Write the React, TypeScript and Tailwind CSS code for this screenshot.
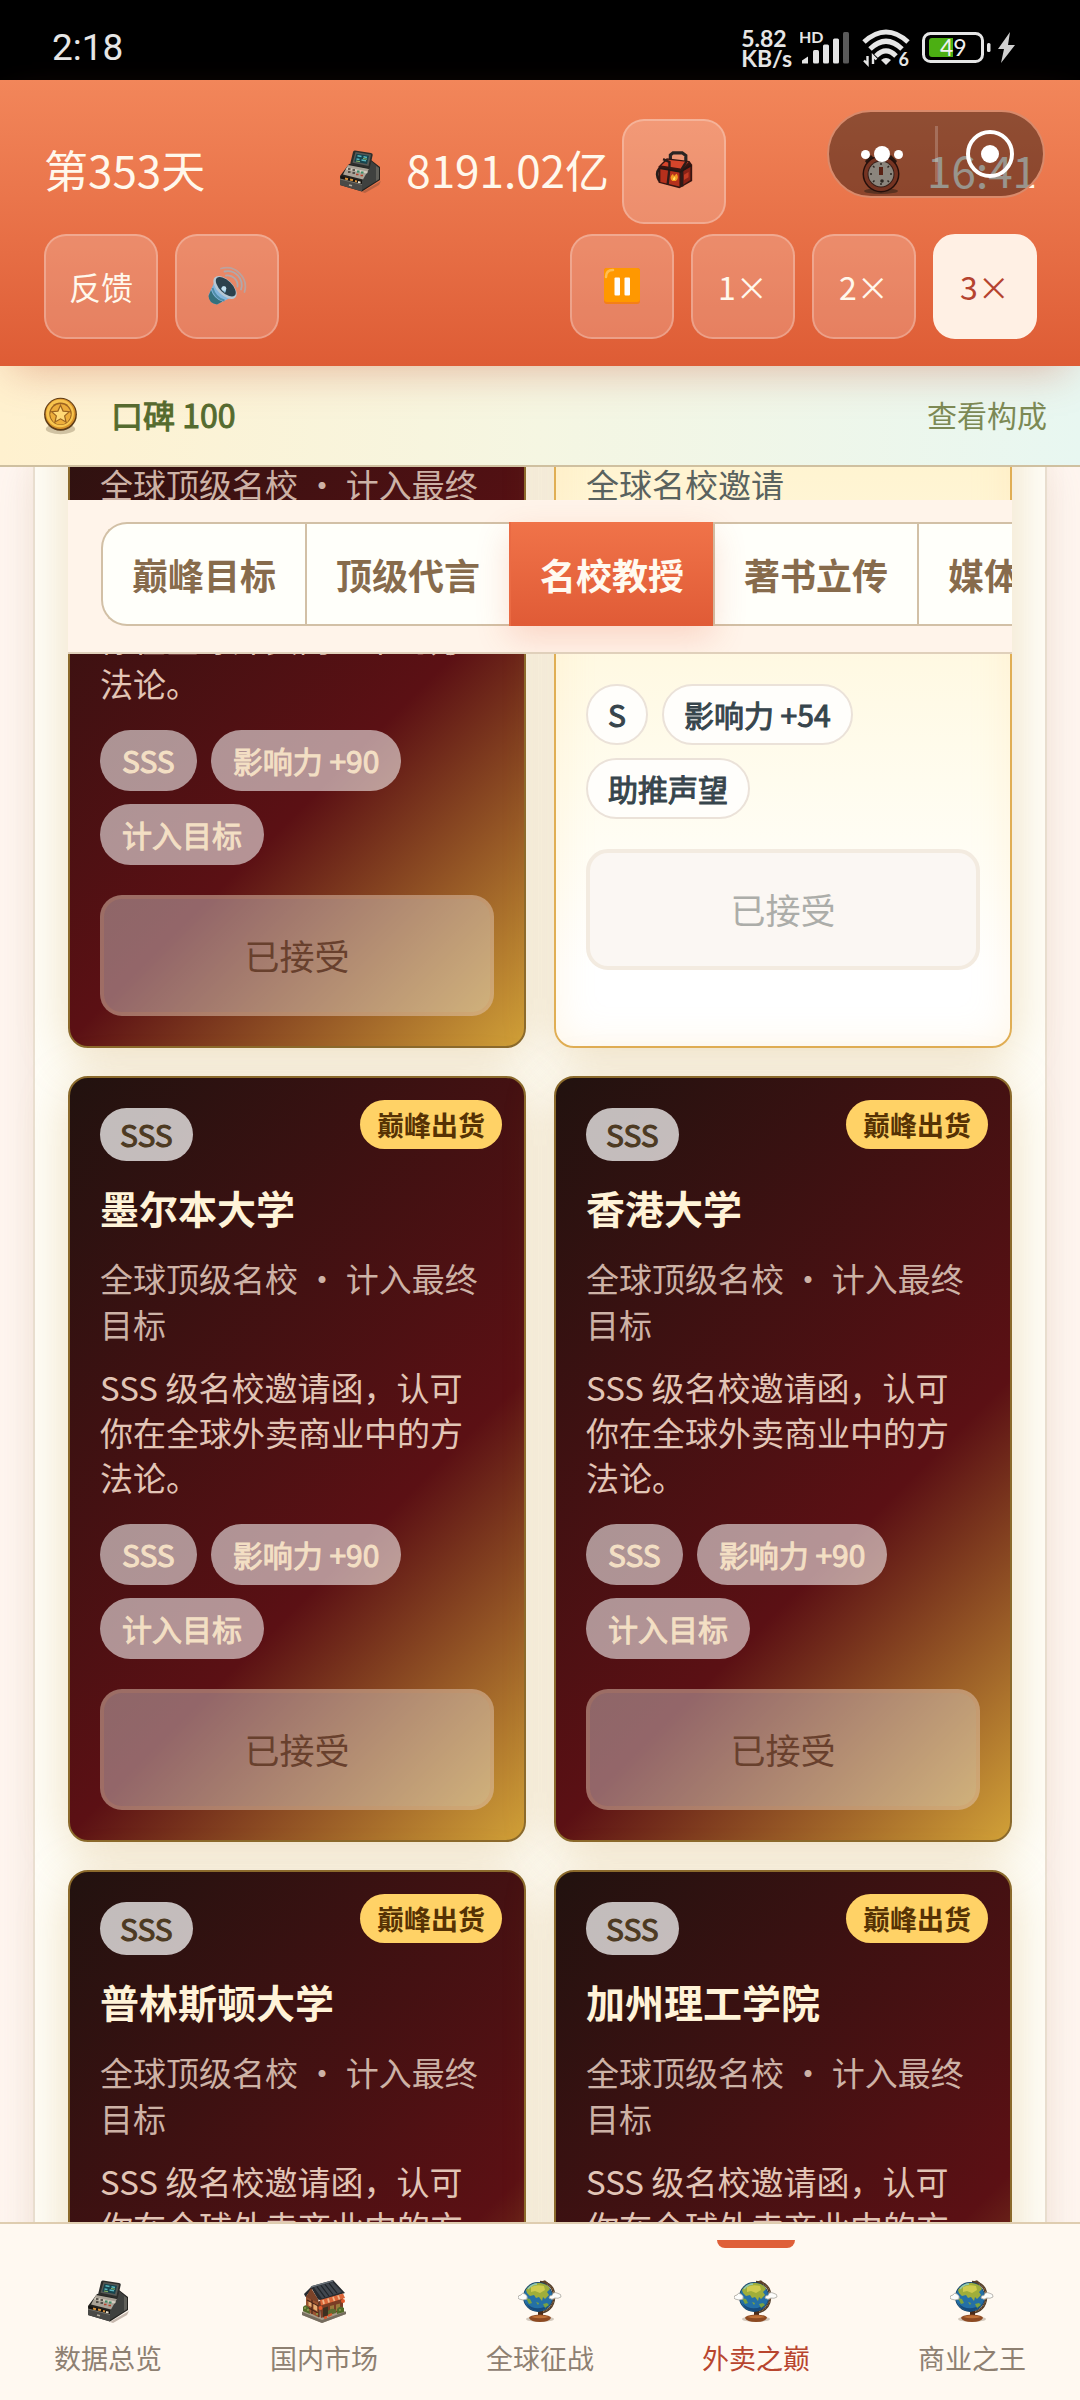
import type { ReactNode } from "react";

type IconProps = { className?: string };

const RegisterIcon = ({ className }: IconProps) => (
  <svg viewBox="0 0 44 44" className={className} aria-hidden="true">
    <path d="M24 42 L43 31 L41 35 L27 43Z" fill="#5b4030" opacity=".35" />
    <path d="M11 14 L33 10 L42 17 V30 L24 41.5 L2 35 V26Z" fill="#23221f" />
    <path d="M33 11 L41 17.5 V29.5 L24 40 V31 L31 19Z" fill="#3f413f" />
    <path d="M38 16 L41 18 V29 L38 31Z" fill="#60605a" />
    <path d="M10 15 L31 19 L25 29.5 L5 24.5Z" fill="#aaa397" />
    <path d="M9 17.5 L30 21.5 L29 23.5 L8 19.5Z" fill="#d3cdbf" />
    <path d="M10 19h2.5M14.5 20h2.5M10 22h2.500M14.500 23h2.500" stroke="#39342e" strokeWidth="1.500" />
    <path d="M19 21.500h2.500M23 22.500h2.500" stroke="#3d8c66" strokeWidth="1.800" />
    <path d="M18 24.500h2.500M22.500 25.500h2.500" stroke="#b3432d" strokeWidth="1.600" />
    <path d="M3 26 L24 31 V34 L3 30Z" fill="#15120f" />
    <path d="M7 28.500l3 .700M12 29.500l3 .800M17 31l2 .500" stroke="#d7913a" strokeWidth="2" />
    <path d="M20 32l2.500 .600" stroke="#ece4ce" strokeWidth="2" />
    <path d="M2 29 L24 34.500 V41.500 L2 35Z" fill="#4a4a47" />
    <path d="M2 29 L24 34.500" stroke="#77766e" strokeWidth="1" />
    <path d="M11 35l3 .800" stroke="#b5b0a3" strokeWidth="1.500" />
    <path d="M17 0.500 L33 3 Q35 3.400 34.700 5 L32 17 Q31.500 18.600 30 18.300 L14 15 Q12 14.500 12.400 13 L15 2 Q15.400 0.300 17 .500Z" fill="#2c2d2b" />
    <path d="M17.500 2 L33 4.500 L30.500 16 L14.500 12.800Z" fill="#575955" />
    <path d="M18.500 3.800 L31 5.800 L29 14 L16.300 11.500Z" fill="#17434d" />
    <path d="M19.500 5.800l4 .700M25.500 6.800l3.500 .600M18.500 9l3 .500M23.500 10l4.500 .800" stroke="#58b5bd" strokeWidth="1.500" />
    <path d="M18 11l4 .700M25 8.500l4 .700" stroke="#8db763" strokeWidth="1" />
  </svg>
);

const ShopIcon = ({ className }: IconProps) => (
  <svg viewBox="0 0 44 44" className={className} aria-hidden="true">
    <path d="M0 32 L22 21 L44 32 V34 L20 43 L0 35Z" fill="#a69c8a" />
    <path d="M0 32 L20 40 L44 31.500 V34 L20 43 L0 35Z" fill="#756c5e" />
    <path d="M4 15 L17 22 V37.500 L4 31Z" fill="#9a5330" />
    <path d="M17 21 L41 15 V30 L19 38Z" fill="#7a3d25" />
    <path d="M5 20l11 6M5 27l11 6M10 17v17M17 22v15" stroke="#49261a" strokeWidth="1.200" />
    <path d="M6.500 21.500l3 1.500v4l-3-1.500zM11.500 24l3.500 2v5l-3.500-2z" fill="#e5ae72" />
    <path d="M21 28l5-1.500v9l-5 2z" fill="#3b3020" />
    <path d="M28 26l4-1v7l-4 1.500zM34 24.500l4-1v6l-4 1.500z" fill="#9a7a3c" />
    <path d="M2 14 L10 6 L31 0 L43 13 L20 20.500 L16 19.500 L10 9 L3.500 17Z" fill="#272b30" />
    <path d="M12 7.500 L30.500 2 L40 12 L20 18.500Z" fill="#41474f" />
    <path d="M15 6.700l8 10.700M19 5.500l8 10.500M23 4.300l8 10.200M27 3.200l8 10" stroke="#1f2428" strokeWidth="1.200" />
    <path d="M9 7 L31 .800" stroke="#6c747b" strokeWidth="1.300" />
    <path d="M9 8 L4 17 L17 23 L16 19Z" fill="#7b4329" />
    <path d="M18 20 L41 13.500 L43 18 L19 25.500Z" fill="#dc6638" />
    <path d="M21 20l1 4M26 18.500l1 4M31 17l1.500 4M36 15.500l1.500 4" stroke="#f0b688" strokeWidth="1.800" />
    <circle cx="18.500" cy="28" r="2" fill="#e2592c" />
    <circle cx="41" cy="21" r="2" fill="#e2592c" />
    <path d="M1 27q3-4 6 1l1 6-7-3zM35 29q3-4 7-1v4l-7 2z" fill="#536b2c" />
    <path d="M26 31q4-4 8-1v3l-8 2z" fill="#5d6b30" />
    <path d="M2 28h2M5 30h2M37 30h2M14 34h2" stroke="#8ca04b" strokeWidth="1.500" />
    <path d="M26 36l4-2M22 38l3-1" stroke="#d9572d" strokeWidth="2.500" />
  </svg>
);

const GlobeIcon = ({ className }: IconProps) => (
  <svg viewBox="0 0 44 44" className={className} aria-hidden="true">
    <ellipse cx="22" cy="39" rx="14" ry="3" fill="#4a3620" opacity=".25" />
    <path d="M22 2 Q37 3 36 18 Q35 31 21 33" fill="none" stroke="#4e3a28" strokeWidth="2.600" />
    <path d="M25 2.500 Q37 5 36 18 Q35 30 22 32.500" fill="none" stroke="#a47a4c" strokeWidth="1" strokeDasharray="2 1.500" />
    <path d="M23 1.500l4-1.200 3 2.500-3 2z" fill="#5c4029" />
    <path d="M20 31h5v6h-5z" fill="#4a2b1a" />
    <path d="M11 38 Q11 35 22 34.500 Q33 35 33 38 Q31 42 22 42 Q13 42 11 38Z" fill="#8d4a22" />
    <path d="M13 37 Q22 33.500 31 37 Q22 39.500 13 37Z" fill="#bf7138" />
    <circle cx="20" cy="17" r="15" fill="#1c4465" />
    <circle cx="20" cy="17" r="14.200" fill="#2470a6" />
    <path d="M8 23 Q18 33 32 24 Q27 31 20 31.200 Q12 31 8 23Z" fill="#164b7e" />
    <path d="M8 10 Q13 2.500 22 3 Q30 4 32 9 L29 12 L31 15 L27 19 L25 17 L24 21 L21 17 L18 18 L16 15 L12 16 L9 13Z" fill="#9fae3a" />
    <path d="M13 7 Q19 4 26 6 L27 10 L22 13 L17 11 L13 12Z" fill="#cfcb4e" />
    <path d="M8 18l4 1 2 4-3 1zM25 24l4-1 2 2-4 3zM18 22l3 1-1 2z" fill="#7aa341" />
    <path d="M10 9 Q14 4 19 4" fill="none" stroke="#8fd0d0" strokeWidth="1.300" opacity=".8" />
    <path d="M0 18 Q0 15 3 15 Q4 12 7 14 Q10 16 9 19 Q5 21 1 19Z" fill="#fdfdfb" stroke="#aaa79f" strokeWidth=".800" />
    <path d="M31 18 Q31 15 34 15.500 Q35 11.500 39 13 Q44 14 43 17 Q40 19 37 18 Q34 20.500 31 18Z" fill="#fdfdfb" stroke="#aaa79f" strokeWidth=".800" />
  </svg>
);

const BackpackIcon = ({ className }: IconProps) => (
  <svg viewBox="0 0 44 44" className={className} aria-hidden="true">
    <path d="M18 9V4.500L21 2h10l4 3v6" fill="none" stroke="#2b2523" strokeWidth="3.500" />
    <path d="M6 19 Q1 25 6 33" fill="none" stroke="#241d1b" strokeWidth="3" />
    <path d="M5 17 L14 8 L39 11 L42 15 V33 L28 41 L5 35Z" fill="#381511" />
    <path d="M8 16 L15 9.500 L38 12 L31 19.500Z" fill="#d6452b" />
    <path d="M7 19 L28 23 V39 L7 34Z" fill="#b5301c" />
    <path d="M30 23 L40 16 V32 L30 38.500Z" fill="#8a2216" />
    <path d="M10 9 L17 12 V19 L15 37M36 11 L31 19 V39" fill="none" stroke="#2d1b18" strokeWidth="2.600" />
    <path d="M6 19 L29 23 L41 16" fill="none" stroke="#231614" strokeWidth="1.800" />
    <path d="M20 33q-4-4 1-8q0 3 2 2q1-2 2-2q3 5-1 8z" fill="#f49b22" />
    <path d="M21 32q-1-2 2-4q1 2 0 4z" fill="#ffe06a" />
    <path d="M33 26l5-3v6l-5 3z" fill="#c33b24" />
  </svg>
);

const ClockIcon = ({ className }: IconProps) => (
  <svg viewBox="0 0 44 44" className={className} aria-hidden="true">
    <ellipse cx="22" cy="41" rx="17" ry="3" fill="#5e3d2b" opacity=".6" />
    <path d="M6 11l6-6 4 4-7 7zM38 11l-6-6-4 4 7 7zM19 3h6v7h-6z" fill="#46281e" />
    <circle cx="22" cy="24" r="18.500" fill="#3f1a12" />
    <circle cx="22" cy="24" r="17" fill="#c4573a" />
    <circle cx="22" cy="24" r="13.500" fill="#5e3428" />
    <circle cx="22" cy="24" r="12.500" fill="#e8ded0" />
    <path d="M22 13v2M22 33v2M11 24h2M31 24h2M14 16l1.500 1.500M30 16l-1.500 1.500M14 32l1.500-1.500M30 32l-1.500-1.500" stroke="#4b4139" strokeWidth="1.500" />
    <path d="M22 17v8" stroke="#943a24" strokeWidth="4" />
    <circle cx="23" cy="31" r="1.800" fill="#4b4139" />
  </svg>
);

const CoinIcon = ({ className }: IconProps) => (
  <svg viewBox="0 0 40 44" className={className} aria-hidden="true">
    <ellipse cx="20" cy="37" rx="17" ry="6" fill="#7a6a4a" opacity=".35" />
    <circle cx="20" cy="20" r="19" fill="#5c3a17" />
    <circle cx="20" cy="19.500" r="17.500" fill="#d6922b" />
    <circle cx="19.500" cy="19" r="16" fill="#f8c64f" />
    <circle cx="20" cy="19.500" r="13" fill="#9c6420" />
    <circle cx="20" cy="20" r="11.800" fill="#edae3b" />
    <path d="M20 9.500l3 6.800 7.300.700-5.500 4.900 1.600 7.200L20 25.300l-6.400 3.800 1.600-7.200-5.500-4.900 7.300-.700z" fill="#ffd976" stroke="#9c6420" strokeWidth="1.400" />
  </svg>
);

const SpeakerIcon = ({ className }: IconProps) => (
  <svg viewBox="0 0 40 40" className={className} aria-hidden="true">
    <g fill="none" stroke="#b0a9ab" strokeWidth="1.800" strokeLinecap="round">
      <path d="M19 9.500a10 10 0 0 1 11.500 11" />
      <path d="M17.500 5.500a14 14 0 0 1 16.500 18" />
      <path d="M14 2.500a19 19 0 0 1 23.500 23.500" opacity=".8" />
    </g>
    <path d="M7 17 L1.500 29 Q2 37.500 10 38.500 L23 32Z" fill="#83b5dc" />
    <path d="M4 24 L1.500 30 Q2 37.500 10 38.500 L15.500 35.500 Q7 33 4 24Z" fill="#35707c" />
    <path d="M5.500 22 Q8 32 17.500 34.500" fill="none" stroke="#4f8da9" strokeWidth="2" />
    <ellipse cx="18" cy="21.500" rx="14.300" ry="7.800" transform="rotate(44 18 21.500)" fill="#b5c7d4" />
    <ellipse cx="18.800" cy="20.800" rx="12.500" ry="6.200" transform="rotate(44 18.800 20.800)" fill="#2b414d" />
    <path d="M14 23 Q15 19 18.500 21 Q20 23 18 27Z" fill="#8fc1df" />
    <circle cx="17" cy="22.500" r="2.300" fill="#c4e0ef" />
  </svg>
);

const PauseIcon = ({ className }: IconProps) => (
  <svg viewBox="0 0 38 38" className={className} aria-hidden="true">
    <rect x="1" y="1" width="36" height="36" rx="3" fill="#f57f17" />
    <rect x="1" y="1" width="36" height="34" rx="3" fill="#ff9800" />
    <path d="M3 10 Q3 3 10 3" fill="none" stroke="#ffbd52" strokeWidth="2.500" strokeLinecap="round" />
    <rect x="11.500" y="10.500" width="5.500" height="18" rx="1" fill="#fdfdfd" />
    <rect x="21.500" y="10.500" width="5.500" height="18" rx="1" fill="#fdfdfd" />
  </svg>
);

const SignalIcon = () => (
  <svg viewBox="0 0 50 36" className="h-9 w-[50px]" aria-hidden="true">
    <text x="-1" y="12.500" fontSize="16" fontWeight="700" fontFamily="Lato, sans-serif" fill="#e6e6e6">HD</text>
    <g fill="#e6e6e6">
      <path d="M2 33.500v-3l6-4v7z" />
      <rect x="13" y="20" width="6" height="13.500" rx="1.500" />
      <rect x="23" y="14.500" width="6" height="19" rx="1.500" />
      <rect x="33" y="8.500" width="6" height="25" rx="1.500" />
    </g>
    <rect x="43" y="2" width="6" height="31.500" rx="1.500" fill="#5a5a5a" />
  </svg>
);

const WifiIcon = () => (
  <svg viewBox="0 0 48 38" className="h-[38px] w-12" aria-hidden="true">
    <g fill="none" stroke="#e6e6e6" strokeWidth="5">
      <path d="M2 13 Q24 -7 46 13" />
      <path d="M8 20 Q24 4.500 40 20" />
      <path d="M14 27 Q24 17 34 27" />
    </g>
    <path d="M24 36l-5-5q5-4 10 0z" fill="#e6e6e6" />
    <path d="M5.500 27v8l-3.500-3.500M11 35v-8l3.500 3.500" fill="none" stroke="#e6e6e6" strokeWidth="2.400" />
    <text x="36.500" y="36.500" fontSize="18" fontWeight="700" fontFamily="Lato, sans-serif" fill="#e6e6e6">6</text>
  </svg>
);

const BatteryIcon = () => (
  <svg viewBox="0 0 96 34" className="h-[34px] w-24" aria-hidden="true">
    <rect x="1.500" y="2.500" width="59" height="28" rx="7" fill="none" stroke="#e6e6e6" strokeWidth="3" />
    <path d="M10 7h21v19H10q-3 0-3-3V10q0-3 3-3z" fill="#4caf13" />
    <text x="18" y="24.500" fontSize="23" fontFamily="Lato, sans-serif" fill="#f2f2f2">49</text>
    <rect x="65" y="12" width="3.500" height="9" rx="1.500" fill="#e6e6e6" />
    <path d="M88 1L76 18h6l-3 14 14-18h-7z" fill="#d0d0d0" />
  </svg>
);

function ToolButton({ children, label, wide, active }: { children: ReactNode; label?: string; wide?: boolean; active?: boolean }) {
  return (
    <button
      aria-label={label}
      className={`flex h-[105px] items-center justify-center rounded-[22px] border-2 pb-0.5 text-[32px] ${wide ? "w-[114px]" : "w-[104px]"} ${
        active ? "border-[#fff0e4] bg-[#fff0e4] text-[#b5432f]" : "border-white/25 bg-white/20 text-[#fff8ec]"
      }`}
    >
      {children}
    </button>
  );
}

function StatusBar() {
  return (
    <div className="flex h-20 shrink-0 items-center justify-between bg-black pt-[16px] pr-[62px] pl-[52px] text-[#e6e6e6]">
      <span className="font-[Roboto,sans-serif] text-[37px] leading-10">2:18</span>
      <div className="flex items-center gap-2">
        <div className="font-[Lato,sans-serif] text-[23px] leading-5 font-bold">
          <div>5.82</div>
          <div>KB/s</div>
        </div>
        <SignalIcon />
        <div className="ml-1 flex items-center gap-3">
          <WifiIcon />
          <BatteryIcon />
        </div>
      </div>
    </div>
  );
}

function Header() {
  return (
    <header className="relative z-20 shrink-0 bg-linear-to-b from-[#f2865a] to-[#de5c35] pt-[39px] pr-[43px] pb-[27px] pl-11 text-[44px] leading-[60px] text-[#fff8ec] shadow-[0_16px_40px_-12px_rgba(200,90,60,0.4)]">
      <div className="flex h-[105px] items-center justify-between">
        <span className="pb-1.5">第353天</span>
        <div className="flex items-center gap-[13px]">
          <div className="flex items-center gap-6">
            <RegisterIcon className="size-11" />
            <span className="pb-1.5">8191.02亿</span>
          </div>
          <ToolButton label="背包">
            <BackpackIcon className="size-10" />
          </ToolButton>
        </div>
        <div className="flex items-center gap-6">
          <ClockIcon className="size-11" />
          <span className="pb-1.5">16:41</span>
        </div>
      </div>
      <div className="mt-[10px] flex justify-between">
        <div className="flex gap-[17px]">
          <ToolButton wide>反馈</ToolButton>
          <ToolButton label="声音">
            <SpeakerIcon className="size-10" />
          </ToolButton>
        </div>
        <div className="flex gap-[17px]">
          <ToolButton label="暂停">
            <PauseIcon className="size-[38px]" />
          </ToolButton>
          <ToolButton>1×</ToolButton>
          <ToolButton>2×</ToolButton>
          <ToolButton active>3×</ToolButton>
        </div>
      </div>
      <div className="absolute top-[30px] right-[35px] flex h-[88px] w-[218px] items-center rounded-full border-2 border-[#d98a6b] bg-black/40">
        <button aria-label="更多" className="flex h-full flex-1 items-center justify-center gap-1">
          <i className="size-[9px] rounded-full bg-white" />
          <i className="size-4 rounded-full bg-white" />
          <i className="size-[9px] rounded-full bg-white" />
        </button>
        <i className="h-14 w-[3px] bg-white/20" />
        <button aria-label="关闭" className="flex h-full flex-1 items-center justify-center">
          <span className="flex size-12 items-center justify-center rounded-full border-4 border-white">
            <i className="size-[18px] rounded-full bg-white" />
          </span>
        </button>
      </div>
    </header>
  );
}

type School = { name: string; rank: "SSS" | "S"; sub: string; desc: string; chips: string[] };

const TOP_SUB = "全球顶级名校 • 计入最终目标";
const TOP_DESC = "SSS 级名校邀请函，认可你在全球外卖商业中的方法论。";
const TOP_CHIPS = ["SSS", "影响力 +90", "计入目标"];

const SCHOOLS: School[] = [
  { name: "牛津大学", rank: "SSS", sub: TOP_SUB, desc: TOP_DESC, chips: TOP_CHIPS },
  { name: "多伦多大学", rank: "S", sub: "全球名校邀请", desc: "S 级名校邀请函，邀请你分享在全球外卖商业中的心血。", chips: ["S", "影响力 +54", "助推声望"] },
  { name: "墨尔本大学", rank: "SSS", sub: TOP_SUB, desc: TOP_DESC, chips: TOP_CHIPS },
  { name: "香港大学", rank: "SSS", sub: TOP_SUB, desc: TOP_DESC, chips: TOP_CHIPS },
  { name: "普林斯顿大学", rank: "SSS", sub: TOP_SUB, desc: TOP_DESC, chips: TOP_CHIPS },
  { name: "加州理工学院", rank: "SSS", sub: TOP_SUB, desc: TOP_DESC, chips: TOP_CHIPS },
];

function SchoolCard({ school }: { school: School }) {
  const top = school.rank === "SSS";
  return (
    <article
      className={`relative rounded-[20px] border-2 p-[30px] ${
        top
          ? "border-[#8b6a2c] bg-[linear-gradient(135deg,#21120f_0%,#5b1014_62%,#d2a238_100%)] bg-origin-border shadow-[0_10px_50px_rgba(190,140,50,0.28)]"
          : "border-[#e0ae54] bg-[linear-gradient(180deg,#ffefc0_0%,#fffcee_65%,#ffffff_90%)] shadow-[0_10px_50px_rgba(190,140,50,0.28),inset_0_0_40px_rgba(255,205,120,0.18)]"
      }`}
    >
      {top && (
        <span className="absolute top-[22px] right-[22px] rounded-full bg-[#ffd266] px-[17px] text-[27px] leading-[49px] font-bold text-[#563204]">
          巅峰出货
        </span>
      )}
      <span
        className={`block w-fit rounded-full px-5 text-[30px] leading-[53px] [-webkit-text-stroke:1px] ${
          top ? "bg-white/72 text-[#4d3a22]" : "bg-white text-[#37474f]"
        }`}
      >
        {school.rank}
      </span>
      <h2 className={`mt-[22px] text-[39px] leading-12 font-bold ${top ? "text-[#fff3d8]" : "text-[#3a2a1a]"}`}>{school.name}</h2>
      <p className={`mt-[24px] text-[33px] leading-[46px] ${top ? "text-[#cdb2a6]" : "text-[#59625f]"}`}>{school.sub}</p>
      <p className={`mt-[18px] text-[33px] leading-[45px] ${top ? "text-[#e2c5b6]" : "text-[#59625f]"}`}>{school.desc}</p>
      <ul className="mt-[24px] flex flex-wrap gap-x-[14px] gap-y-[13px]">
        {school.chips.map((chip) => (
          <li
            key={chip}
            className={`rounded-full border-2 px-5 text-[30px] leading-[57px] [-webkit-text-stroke:1px] ${
              top ? "border-transparent bg-white/55 text-[#f3dfc4]" : "border-[#ebe2d9] bg-[#fffefb] text-[#37454c]"
            }`}
          >
            {chip}
          </li>
        ))}
      </ul>
      <button
        disabled
        className={`mt-[30px] h-[121px] w-full rounded-[22px] border-4 text-[35px] ${
          top ? "border-[#d08a5a]/20 bg-[#e9e9e9]/40 text-[#68402d]" : "border-[#f3ebe0] bg-[#fbf7f3] text-[#acada9]"
        }`}
      >
        已接受
      </button>
    </article>
  );
}

const TABS = ["巅峰目标", "顶级代言", "名校教授", "著书立传", "媒体采访"];

function TabStrip() {
  return (
    <div className="relative z-10 mt-[33px] overflow-hidden border-b-2 border-[#e0d0bb] bg-[#fff4ea] pt-[22px] pb-[26px] pl-[33px]">
      <div role="tablist" className="flex">
        {TABS.map((tab, i) => (
          <button
            key={tab}
            role="tab"
            aria-selected={i === 2}
            className={`h-[104px] shrink-0 pr-[29px] pl-[29px] text-[36px] font-bold whitespace-nowrap ${
              i === 2
                ? "relative z-10 border-l-2 border-[#ea6a43] bg-linear-to-b from-[#f07349] to-[#e05b36] text-[#fffaf0] shadow-[0_12px_32px_rgba(230,90,50,0.2)]"
                : "border-y-2 border-l-2 border-[#d2c0a6] bg-[#fffffa] text-[#876b4c]"
            } ${i === 0 ? "rounded-l-[26px]" : ""}`}
          >
            {tab}
          </button>
        ))}
      </div>
    </div>
  );
}

const NAV = [
  { label: "数据总览", Icon: RegisterIcon },
  { label: "国内市场", Icon: ShopIcon },
  { label: "全球征战", Icon: GlobeIcon },
  { label: "外卖之巅", Icon: GlobeIcon },
  { label: "商业之王", Icon: GlobeIcon },
];

export default function App() {
  return (
    <div className="flex h-screen flex-col overflow-hidden bg-[#fff6f0] font-['Noto_Sans_CJK_SC',sans-serif]">
      <StatusBar />
      <Header />
      <section className="flex h-[101px] shrink-0 items-center border-b-2 border-[#cfc0a0] bg-linear-to-r from-[#fff1cf] via-[#f5f6e2] to-[#e8f7f1] pr-[33px] pl-[43px]">
        <CoinIcon className="h-[38px] w-[35px]" />
        <span className="ml-[33px] pb-1 text-[32px] text-[#556b2f] [-webkit-text-stroke:1px]">口碑 100</span>
        <a href="#reputation" className="ml-auto pb-0.5 text-[30px] text-[#7c8a55]">
          查看构成
        </a>
      </section>
      <main className="min-h-0 flex-1 overflow-hidden">
        <div className="mx-[33px] min-h-full border-x-2 border-[#eae0d2] bg-[#fffef8] px-[33px] shadow-[0_0_40px_rgba(150,110,90,0.14)]">
          <div className="flow-root">
            <TabStrip />
            <div className="-mt-[372px] grid grid-cols-2 gap-7">
              {SCHOOLS.map((s) => (
                <SchoolCard key={s.name} school={s} />
              ))}
            </div>
          </div>
        </div>
      </main>
      <nav className="relative z-10 grid shrink-0 grid-cols-5 border-t-2 border-[#dfcdb0] bg-[#fff9f1] pt-4">
        {NAV.map(({ label, Icon }, i) => (
          <a
            key={label}
            href={`#page-${i + 1}`}
            className={`relative flex h-40 flex-col items-center gap-[14px] pt-10 text-[27px] leading-10 ${i === 3 ? "text-[#b8452e]" : "text-[#8e8071]"}`}
          >
            {i === 3 && <i className="absolute top-0 h-2 w-[78px] rounded-b-lg bg-[#df5f38]" />}
            <Icon className="size-11" />
            {label}
          </a>
        ))}
      </nav>
    </div>
  );
}
